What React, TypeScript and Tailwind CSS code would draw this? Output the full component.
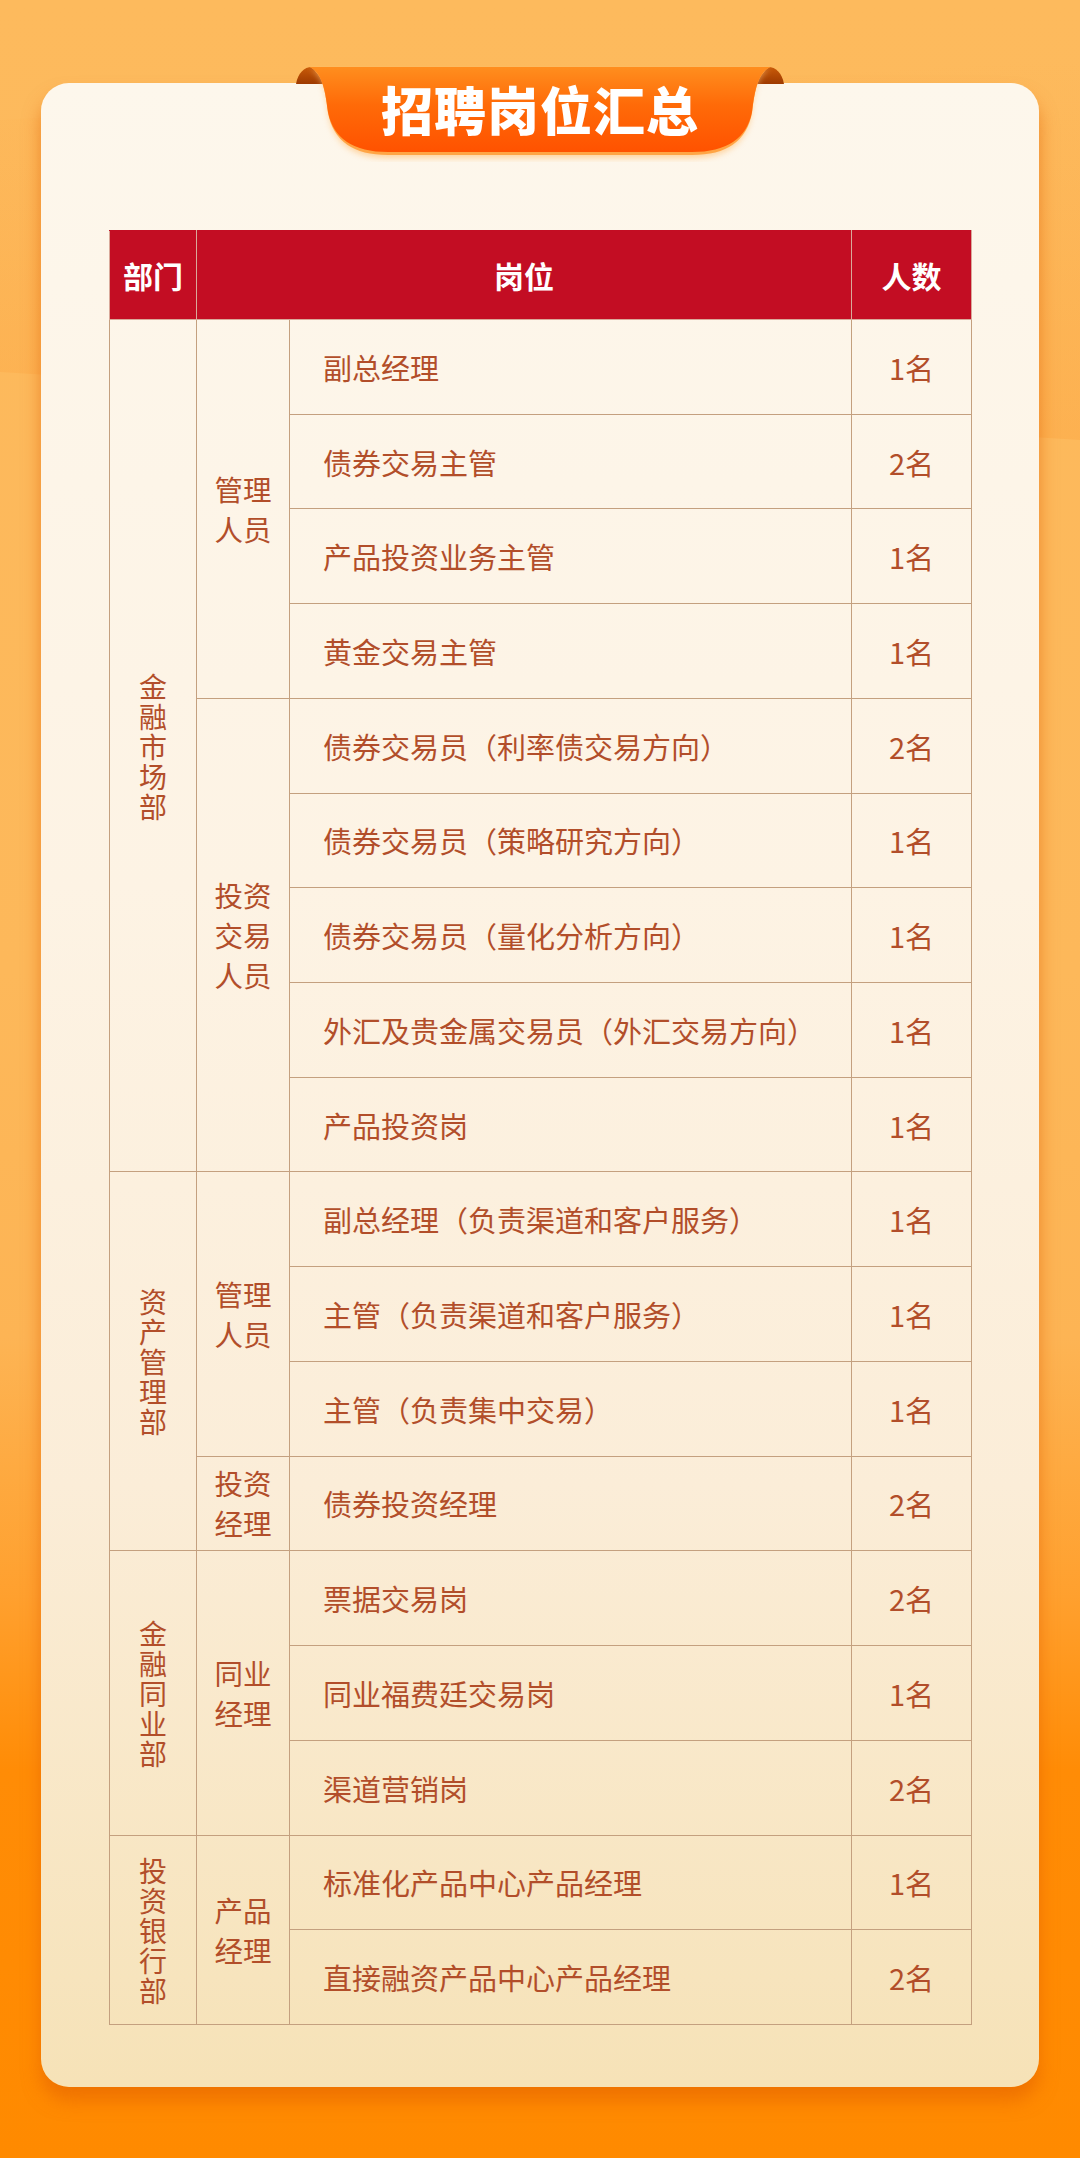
import React from "react";

type Group = { name: string[]; rows: [string, string][] };
type Dept = { dept: string; groups: Group[] };

const data: Dept[] = [
  {
    dept: "金融市场部",
    groups: [
      {
        name: ["管理", "人员"],
        rows: [
          ["副总经理", "1名"],
          ["债券交易主管", "2名"],
          ["产品投资业务主管", "1名"],
          ["黄金交易主管", "1名"],
        ],
      },
      {
        name: ["投资", "交易", "人员"],
        rows: [
          ["债券交易员（利率债交易方向）", "2名"],
          ["债券交易员（策略研究方向）", "1名"],
          ["债券交易员（量化分析方向）", "1名"],
          ["外汇及贵金属交易员（外汇交易方向）", "1名"],
          ["产品投资岗", "1名"],
        ],
      },
    ],
  },
  {
    dept: "资产管理部",
    groups: [
      {
        name: ["管理", "人员"],
        rows: [
          ["副总经理（负责渠道和客户服务）", "1名"],
          ["主管（负责渠道和客户服务）", "1名"],
          ["主管（负责集中交易）", "1名"],
        ],
      },
      { name: ["投资", "经理"], rows: [["债券投资经理", "2名"]] },
    ],
  },
  {
    dept: "金融同业部",
    groups: [
      {
        name: ["同业", "经理"],
        rows: [
          ["票据交易岗", "2名"],
          ["同业福费廷交易岗", "1名"],
          ["渠道营销岗", "2名"],
        ],
      },
    ],
  },
  {
    dept: "投资银行部",
    groups: [
      {
        name: ["产品", "经理"],
        rows: [
          ["标准化产品中心产品经理", "1名"],
          ["直接融资产品中心产品经理", "2名"],
        ],
      },
    ],
  },
];

function Ribbon() {
  return (
    <div className="absolute left-[295px] top-[66px] w-[490px] h-[96px]">
      <svg width="490" height="96" viewBox="0 0 490 96" className="absolute inset-0">
        <defs>
          <linearGradient id="rb" x1="0" y1="0" x2="0" y2="1">
            <stop offset="0" stopColor="#FF8E1E" />
            <stop offset="0.45" stopColor="#FF6A08" />
            <stop offset="1" stopColor="#FF5200" />
          </linearGradient>
          <linearGradient id="fl" x1="0" y1="0" x2="0" y2="1">
            <stop offset="0" stopColor="#C85A08" />
            <stop offset="1" stopColor="#9E3A00" />
          </linearGradient>
          <filter id="sh" x="-10%" y="-10%" width="120%" height="140%">
            <feGaussianBlur stdDeviation="3" />
          </filter>
        </defs>
        <path d="M1 18 C3 7 9 1 17 1 L31 18 Z" fill="url(#fl)" />
        <path d="M489 18 C487 7 481 1 473 1 L459 18 Z" fill="url(#fl)" />
        <path
          d="M16 3 H474 C463 9 459 22 456 50 Q448 92 396 92 H94 Q42 92 34 50 C31 22 27 9 16 3 Z"
          fill="#FFC27A"
          opacity="0.7"
          filter="url(#sh)"
        />
        <path
          d="M15 1 H475 C464 7 460 20 457 47 Q449 89 397 89 H93 Q41 89 33 47 C30 20 26 7 15 1 Z"
          fill="#FFA545"
        />
        <path
          d="M15 1 H475 C464 7 460 20 457 46 Q449 86 397 86 H93 Q41 86 33 46 C30 20 26 7 15 1 Z"
          fill="url(#rb)"
        />
      </svg>
      <div className="absolute inset-x-0 top-[17px] text-center text-[52px] leading-[52px] font-black text-white font-['Noto_Sans_CJK_SC',sans-serif] tracking-[1px]">
        招聘岗位汇总
      </div>
    </div>
  );
}

export default function App() {
  const border = "border border-[#C4A07F]";
  return (
    <div className="relative w-[1080px] h-[2158px] overflow-hidden bg-[linear-gradient(180deg,#FDBA5D_0%,#FDB85A_45%,#FDB454_62%,#FFA02E_74%,#FF8C06_82%,#FF8A00_100%)] font-['Noto_Sans_CJK_SC',sans-serif]">
      <svg className="absolute inset-0" width="1080" height="2158" viewBox="0 0 1080 2158">
        <defs>
          <linearGradient id="bg1" x1="0" y1="0" x2="0" y2="1">
            <stop offset="0" stopColor="#FCA23C" stopOpacity="0" />
            <stop offset="1" stopColor="#FCA23C" stopOpacity="0.35" />
          </linearGradient>
        </defs>
        <polygon points="0,120 1080,60 1080,440 0,372" fill="url(#bg1)" />
      </svg>

      <div className="relative mx-[41px] mt-[83px] w-[998px] h-[2004px] rounded-[28px] bg-[linear-gradient(180deg,#FDF7EC_0%,#FDF3E4_40%,#FBEDD8_70%,#F6E2B7_100%)] shadow-[0_14px_18px_rgba(225,95,0,0.55)] pt-[147px] pl-[68px]">
        <table className="table-fixed border-collapse w-[862px] text-[#B24E2A]">
          <colgroup>
            <col className="w-[87px]" />
            <col className="w-[93px]" />
            <col className="w-[562px]" />
            <col className="w-[120px]" />
          </colgroup>
          <thead>
            <tr className="h-[89px] bg-[#C30D23] text-white text-[30px] font-bold">
              <th className="border border-[#D9A99A] border-t-[#C30D23] font-bold">部门</th>
              <th colSpan={2} className="border border-[#D9A99A] border-t-[#C30D23] font-bold">
                岗位
              </th>
              <th className="border border-[#D9A99A] border-t-[#C30D23] font-bold">人数</th>
            </tr>
          </thead>
          <tbody>
            {data.map((d) => {
              const total = d.groups.reduce((s, g) => s + g.rows.length, 0);
              return d.groups.map((g, gi) =>
                g.rows.map((r, ri) => (
                  <tr key={d.dept + gi + ri} className="h-[94.72px]">
                    {gi === 0 && ri === 0 && (
                      <td rowSpan={total} className={`${border} text-center align-middle p-0`}>
                        <div className="flex flex-col items-center text-[28px] leading-[30px]">
                          {d.dept.split("").map((c, i) => (
                            <span key={i} className="block h-[30px] leading-[30px]">
                              {c}
                            </span>
                          ))}
                        </div>
                      </td>
                    )}
                    {ri === 0 && (
                      <td rowSpan={g.rows.length} className={`${border} text-center align-middle p-0`}>
                        <div className="flex flex-col items-center text-[28.5px] leading-[40px]">
                          {g.name.map((n, i) => (
                            <span key={i}>{n}</span>
                          ))}
                        </div>
                      </td>
                    )}
                    <td className={`${border} pl-[33px] text-[29px] leading-[36px] whitespace-nowrap`}>{r[0]}</td>
                    <td className={`${border} text-center text-[29px] leading-[36px]`}>{r[1]}</td>
                  </tr>
                ))
              );
            })}
          </tbody>
        </table>
      </div>

      <Ribbon />
    </div>
  );
}
